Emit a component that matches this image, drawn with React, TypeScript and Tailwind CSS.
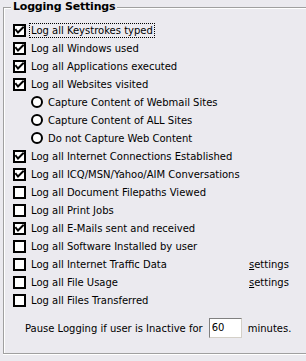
import React from "react";

const Check = ({ checked }: { checked: boolean }) => (
  <svg width="13" height="13" viewBox="0 0 13 13" className="shrink-0">
    <rect x="1" y="1" width="11" height="11" fill="#fff" stroke="#000" strokeWidth="2" />
    {checked && (
      <path d="M3 6 L5 8.5 L10 3.5" fill="none" stroke="#000" strokeWidth="2" strokeLinecap="square" />
    )}
  </svg>
);

const Radio = () => (
  <svg width="12" height="12" viewBox="0 0 12 12" className="shrink-0">
    <circle cx="6" cy="6" r="5" fill="#fff" stroke="#000" strokeWidth="2" />
  </svg>
);

type Item =
  | { kind: "c"; label: string; checked: boolean; settings?: boolean; focus?: boolean }
  | { kind: "r"; label: string };

const items: Item[] = [
  { kind: "c", label: "Log all Keystrokes typed", checked: true, focus: true },
  { kind: "c", label: "Log all Windows used", checked: true },
  { kind: "c", label: "Log all Applications executed", checked: true },
  { kind: "c", label: "Log all Websites visited", checked: true },
  { kind: "r", label: "Capture Content of Webmail Sites" },
  { kind: "r", label: "Capture Content of ALL Sites" },
  { kind: "r", label: "Do not Capture Web Content" },
  { kind: "c", label: "Log all Internet Connections Established", checked: true },
  { kind: "c", label: "Log all ICQ/MSN/Yahoo/AIM Conversations", checked: true },
  { kind: "c", label: "Log all Document Filepaths Viewed", checked: false },
  { kind: "c", label: "Log all Print Jobs", checked: false },
  { kind: "c", label: "Log all E-Mails sent and received", checked: true },
  { kind: "c", label: "Log all Software Installed by user", checked: false },
  { kind: "c", label: "Log all Internet Traffic Data", checked: false, settings: true },
  { kind: "c", label: "Log all File Usage", checked: false, settings: true },
  { kind: "c", label: "Log all Files Transferred", checked: false },
];

export default function App() {
  return (
    <div
      className="w-[306px] h-[361px] bg-[#ebeaef] overflow-hidden text-[10px] text-black pt-[7px] pl-[3px]"
      style={{ fontFamily: "'DejaVu Sans', sans-serif" }}
    >
      <div className="relative w-[320px] h-[347px] border border-[#a0a0a0] shadow-[inset_1px_1px_0_#fff,0_1px_0_#fff]">
        <div className="absolute left-[7px] top-[-8px] px-[2px] bg-[#ebeaef] font-bold text-[11px] leading-[14px] tracking-[-0.2px]">
          Logging Settings
        </div>
        <div className="flex flex-col pt-[13px] pl-[9px]">
          {items.map((it, i) =>
            it.kind === "c" ? (
              <div key={i} className="h-[18px] flex items-center">
                <Check checked={it.checked} />
                <span
                  className={
                    "ml-[4px] leading-[13px] px-[1px] " +
                    (it.focus ? "outline outline-1 outline-dotted outline-black" : "")
                  }
                >
                  {it.label}
                </span>
                {it.settings && (
                  <span className="absolute left-[245px]">
                    <span className="underline">s</span>ettings
                  </span>
                )}
              </div>
            ) : (
              <div key={i} className="h-[18px] flex items-center pl-[18px]">
                <Radio />
                <span className="ml-[5px]">{it.label}</span>
              </div>
            )
          )}
          <div className="mt-[9px] h-[20px] flex items-center pl-[12px]">
            <span>Pause Logging if user is Inactive for</span>
            <div className="ml-[6px] w-[33px] h-[20px] bg-white border-t border-l border-[#808080] border-r-[#d4d0c8] border-b-[#d4d0c8] border-r border-b pl-[2px] leading-[17px]">
              60
            </div>
            <span className="ml-[6px]">minutes.</span>
          </div>
        </div>
      </div>
    </div>
  );
}
